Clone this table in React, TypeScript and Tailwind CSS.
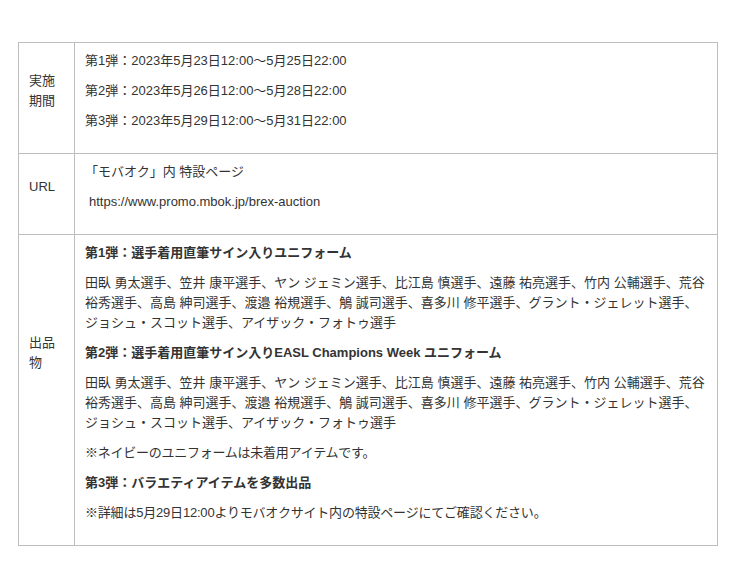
import React from "react";

const names =
  "田臥 勇太選手、笠井 康平選手、ヤン ジェミン選手、比江島 慎選手、遠藤 祐亮選手、竹内 公輔選手、荒谷 裕秀選手、高島 紳司選手、渡邉 裕規選手、鵤 誠司選手、喜多川 修平選手、グラント・ジェレット選手、ジョシュ・スコット選手、アイザック・フォトゥ選手";

export default function App() {
  return (
    <div
      className="w-[740px] h-[586px] bg-white pt-[42px] pl-[18px] text-[13px] leading-[20px] text-[#333333]"
      style={{ fontFamily: '"Liberation Sans", Arial, "Noto Sans CJK JP", sans-serif' }}
    >
      <div className="w-[700px] border border-[#bdbdbd] grid grid-cols-[55px_1fr]">
        {/* Row 1 */}
        <div className="flex items-center pl-[10px] pr-[8px] pt-[8px] pb-[22px]">
          <span>実施期間</span>
        </div>
        <div className="border-l border-[#bdbdbd] pl-[10px] pr-[10px] pt-[8px] pb-[12px]">
          <p className="mb-[10px]">第1弾：2023年5月23日12:00～5月25日22:00</p>
          <p className="mb-[10px]">第2弾：2023年5月26日12:00～5月28日22:00</p>
          <p className="mb-[10px]">第3弾：2023年5月29日12:00～5月31日22:00</p>
        </div>

        {/* Row 2 */}
        <div className="border-t border-[#bdbdbd] flex items-center pl-[10px] pr-[8px] pt-[8px] pb-[22px]">
          <span>URL</span>
        </div>
        <div className="border-t border-l border-[#bdbdbd] pl-[10px] pr-[10px] pt-[8px] pb-[12px]">
          <p className="mb-[10px]">「モバオク」内 特設ページ</p>
          <p className="mb-[10px] pl-[4px]">https://www.promo.mbok.jp/brex-auction</p>
        </div>

        {/* Row 3 */}
        <div className="border-t border-[#bdbdbd] pl-[10px] pr-[8px] pt-[98px]">
          <span>出品物</span>
        </div>
        <div className="border-t border-l border-[#bdbdbd] pl-[10px] pr-[10px] pt-[8px] pb-[12px]">
          <p className="mb-[10px] font-bold">第1弾：選手着用直筆サイン入りユニフォーム</p>
          <p className="mb-[10px]">{names}</p>
          <p className="mb-[10px] font-bold">第2弾：選手着用直筆サイン入りEASL Champions Week ユニフォーム</p>
          <p className="mb-[10px]">{names}</p>
          <p className="mb-[10px] tracking-[-0.25px]">※ネイビーのユニフォームは未着用アイテムです。</p>
          <p className="mb-[10px] font-bold">第3弾：バラエティアイテムを多数出品</p>
          <p className="mb-[10px] tracking-[-0.2px]">※詳細は5月29日12:00よりモバオクサイト内の特設ページにてご確認ください。</p>
        </div>
      </div>
    </div>
  );
}
